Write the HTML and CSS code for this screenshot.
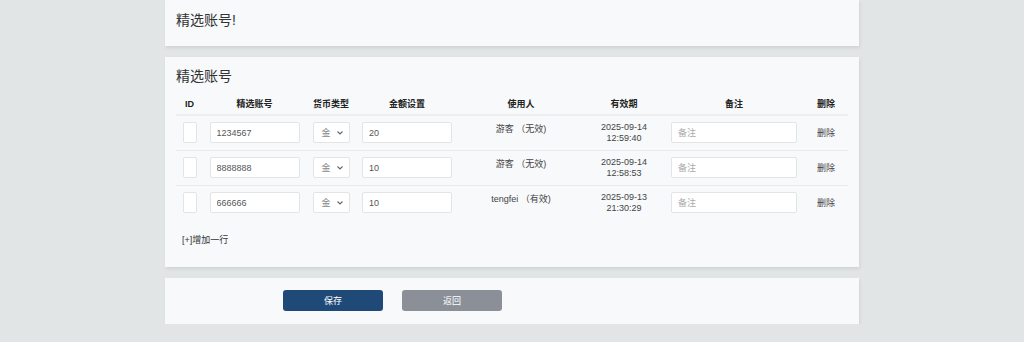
FILE: index.html
```html
<!DOCTYPE html>
<html lang="zh-CN">
<head>
  <meta charset="UTF-8" />
  <title>精选账号</title>
  <link rel="stylesheet" href="styles.css">
</head>
<body>
  <div class="wrap">
    <div class="card notice">
      <h2>精选账号!</h2>
    </div>

    <div class="card main">
      <h2>精选账号</h2>
      <table class="list">
        <thead>
          <tr>
            <th class="c-id">ID</th>
            <th class="c-acc">精选账号</th>
            <th class="c-cur">货币类型</th>
            <th class="c-amt">金额设置</th>
            <th class="c-user">使用人</th>
            <th class="c-date">有效期</th>
            <th class="c-note">备注</th>
            <th class="c-del">删除</th>
          </tr>
        </thead>
        <tbody>
          <tr>
            <td><input class="id-box" type="text"></td>
            <td><input class="box" type="text" value="1234567"></td>
            <td><div class="select"><span>金</span><svg width="8" height="6" viewBox="0 0 8 6"><path d="M1.5 1.5 L4 4 L6.5 1.5" fill="none" stroke="#666" stroke-width="1.1"/></svg></div></td>
            <td><input class="box" type="text" value="20"></td>
            <td class="user">游客 （无效)</td>
            <td class="date">2025-09-14<br>12:59:40</td>
            <td><input class="box note" type="text" placeholder="备注"></td>
            <td class="del">删除</td>
          </tr>
          <tr>
            <td><input class="id-box" type="text"></td>
            <td><input class="box" type="text" value="8888888"></td>
            <td><div class="select"><span>金</span><svg width="8" height="6" viewBox="0 0 8 6"><path d="M1.5 1.5 L4 4 L6.5 1.5" fill="none" stroke="#666" stroke-width="1.1"/></svg></div></td>
            <td><input class="box" type="text" value="10"></td>
            <td class="user">游客 （无效)</td>
            <td class="date">2025-09-14<br>12:58:53</td>
            <td><input class="box note" type="text" placeholder="备注"></td>
            <td class="del">删除</td>
          </tr>
          <tr>
            <td><input class="id-box" type="text"></td>
            <td><input class="box" type="text" value="666666"></td>
            <td><div class="select"><span>金</span><svg width="8" height="6" viewBox="0 0 8 6"><path d="M1.5 1.5 L4 4 L6.5 1.5" fill="none" stroke="#666" stroke-width="1.1"/></svg></div></td>
            <td><input class="box" type="text" value="10"></td>
            <td class="user">tengfei （有效)</td>
            <td class="date">2025-09-13<br>21:30:29</td>
            <td><input class="box note" type="text" placeholder="备注"></td>
            <td class="del">删除</td>
          </tr>
        </tbody>
      </table>
      <div class="add-row">[+]增加一行</div>
    </div>

    <div class="card actions">
      <button class="btn save">保存</button>
      <button class="btn back">返回</button>
    </div>
  </div>
</body>
</html>
```

FILE: styles.css
```css
* {
  box-sizing: border-box;
}
body {
  margin: 0;
  background: #e1e5e5;
  font-family: "Liberation Sans", "Noto Sans CJK SC", sans-serif;
  color: #333;
}
.wrap {
  width: 694px;
  margin: 0 auto;
  display: flex;
  flex-direction: column;
  gap: 11px;
}
.card {
  background: #f7f9fb;
  box-shadow: 1px 2px 3px rgba(0,0,0,0.08);
  padding: 0 11px;
}
.card h2 {
  margin: 0;
  font-size: 14px;
  font-weight: normal;
  color: #333;
  line-height: 20px;
}
.notice {
  height: 46px;
  padding-top: 10px;
}
.main {
  height: 210px;
  padding-top: 9px;
}
.list {
  width: 672px;
  margin-top: 7px;
  border-collapse: collapse;
  table-layout: fixed;
  font-size: 9px;
}
.list th {
  height: 22px;
  font-weight: bold;
  color: #222;
  text-align: center;
  border-bottom: 2px solid #eceef0;
  padding: 0;
}
.list td {
  height: 35px;
  text-align: center;
  vertical-align: middle;
  border-bottom: 1px solid #e8eaec;
  padding: 0;
  color: #444;
}
.list tbody tr:last-child td {
  border-bottom: none;
}
.c-id { width: 27px; }
.c-acc { width: 103px; }
.c-cur { width: 50px; }
.c-amt { width: 102px; }
.c-user { width: 126px; }
.c-date { width: 80px; }
.c-note { width: 140px; }
.c-del { width: 44px; }
.list input {
  font-family: inherit;
  font-size: 9px;
  color: #555;
  background: #fff;
  border: 1px solid #e2e5e8;
  border-radius: 2px;
  height: 21px;
  display: block;
  margin: 0 auto;
  outline: none;
}
.id-box {
  width: 14px;
  padding: 0;
}
.box {
  width: 90px;
  padding: 0 6px;
}
.box.note {
  width: 126px;
}
.box::placeholder {
  color: #aaa;
}
.select {
  width: 37px;
  height: 21px;
  margin: 0 auto;
  background: #fff;
  border: 1px solid #e2e5e8;
  border-radius: 2px;
  display: flex;
  align-items: center;
  justify-content: space-between;
  padding: 0 5px 0 8px;
  color: #888;
}
.list td.user {
  vertical-align: top;
  padding-top: 8px;
  line-height: 11px;
}
.list td.date {
  line-height: 11px;
}
.del {
  color: #333;
}
.add-row {
  font-size: 9px;
  color: #333;
  margin: 13px 0 0 6px;
}
.actions {
  height: 46px;
  display: flex;
  align-items: flex-start;
  gap: 19px;
  padding: 12px 0 0 118px;
}
.btn {
  width: 100px;
  height: 21px;
  border: none;
  border-radius: 3px;
  color: #fff;
  font-family: inherit;
  font-size: 9px;
  cursor: pointer;
}
.save {
  background: #1f4a78;
}
.back {
  background: #8b9098;
}
```
